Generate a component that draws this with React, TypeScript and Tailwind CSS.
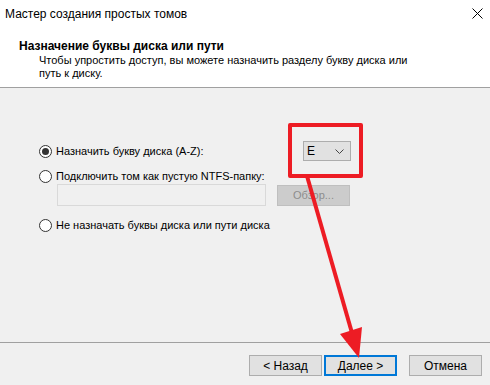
import React from 'react';

function Radio({ checked }: { checked?: boolean }) {
  return (
    <span className="w-[13px] h-[13px] rounded-full border border-[#333333] bg-white flex items-center justify-center shrink-0">
      {checked && <span className="w-[7px] h-[7px] rounded-full bg-[#333333]" />}
    </span>
  );
}

export default function App() {
  return (
    <div className="w-[490px] h-[385px] flex flex-col bg-[#f0f0f0] text-black text-[11.5px] font-['Liberation_Sans',sans-serif] relative overflow-hidden">
      {/* Header */}
      <div className="bg-white h-[87px] flex flex-col shrink-0">
        <div className="h-[27px] flex items-center justify-between pl-[5px] pr-[6px]">
          <span className="leading-none text-[12px]">Мастер создания простых томов</span>
          <svg width="11" height="11" viewBox="0 0 11 11" className="mr-[1px]">
            <path d="M0.5 0.5 L10.5 10.5 M10.5 0.5 L0.5 10.5" stroke="#000" strokeWidth="1" />
          </svg>
        </div>
        <div className="pl-[19px] mt-[12px] font-bold leading-[14px] text-[12px]">Назначение буквы диска или пути</div>
        <div className="pl-[39px] leading-[13px] mt-[1px] text-[11px]">
          Чтобы упростить доступ, вы можете назначить разделу букву диска или
          <br />
          путь к диску.
        </div>
      </div>
      <div className="h-px bg-[#a0a0a0] shrink-0" />

      {/* Body */}
      <div className="flex-1 flex flex-col px-[39px] text-[11px]">
        <div className="mt-[53px] h-[20px] flex items-center">
          <Radio checked />
          <span className="ml-[4px]">Назначить букву диска (A-Z):</span>
          <div className="ml-auto mr-[100px] w-[48px] h-[20px] border border-[#adadad] bg-[#e1e1e1] flex items-center justify-between pl-[3px] pr-[6px] text-[12px]">
            <span>E</span>
            <svg width="9" height="5" viewBox="0 0 9 5">
              <path d="M0.5 0.5 L4.5 4.5 L8.5 0.5" fill="none" stroke="#444" strokeWidth="1" />
            </svg>
          </div>
        </div>
        <div className="mt-[7px] h-[16px] flex items-center">
          <Radio />
          <span className="ml-[4px]">Подключить том как пустую NTFS-папку:</span>
        </div>
        <div className="flex items-center pl-[18px] gap-[11px]">
          <div className="w-[209px] h-[22px] border border-[#d9d9d9] bg-[#f0f0f0]" />
          <div className="w-[73px] h-[21px] bg-[#cccccc] border border-[#bfbfbf] text-[#8d8d8d] flex items-center justify-center">
            Обзор...
          </div>
        </div>
        <div className="mt-[10px] h-[18px] flex items-center">
          <Radio />
          <span className="ml-[4px]">Не назначать буквы диска или пути диска</span>
        </div>
      </div>

      {/* Footer */}
      <div className="h-px bg-[#a0a0a0] shrink-0" />
      <div className="h-[42px] shrink-0 flex items-center justify-end pr-[8px] pt-[3px] text-[12px]">
        <div className="w-[73px] h-[21px] bg-[#e1e1e1] border border-[#adadad] flex items-center justify-center">
          &lt; Назад
        </div>
        <div className="ml-[2px] w-[73px] h-[21px] bg-[#e1e1e1] border-2 border-[#0078d7] flex items-center justify-center">
          Далее &gt;
        </div>
        <div className="ml-[12px] w-[73px] h-[21px] bg-[#e1e1e1] border border-[#adadad] flex items-center justify-center">
          Отмена
        </div>
      </div>

      {/* Annotation overlay */}
      <div className="absolute left-[288px] top-[123px] w-[75px] h-[55px] border-4 border-[#ed1c24] rounded-[2px]" />
      <svg className="absolute left-0 top-0 pointer-events-none" width="490" height="385" viewBox="0 0 490 385">
        <line x1="307" y1="176" x2="352" y2="333" stroke="#ed1c24" strokeWidth="4" />
        <polygon points="359,358 362,327 340,334" fill="#ed1c24" />
      </svg>
    </div>
  );
}
